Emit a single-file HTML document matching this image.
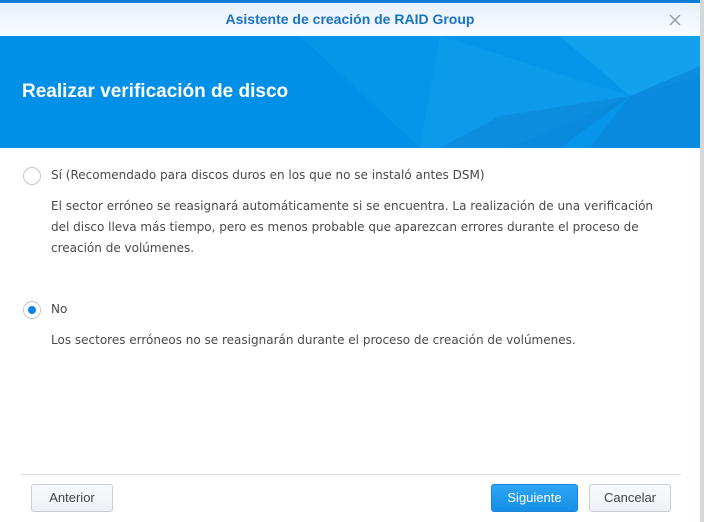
<!DOCTYPE html>
<html><head><meta charset="utf-8"><style>
*{margin:0;padding:0;box-sizing:border-box}
body{width:704px;height:522px;overflow:hidden;background:#fff;position:relative;font-family:"DejaVu Sans","Liberation Sans",sans-serif;}
.topline{position:absolute;left:0;top:0;width:704px;height:3px;background:#0a7fd6}
.hdr{position:absolute;left:0;top:3px;width:700px;height:33px;background:linear-gradient(#e6f1fb,#fafcfe);}
.hdr .t{position:absolute;left:0;right:0;top:8px;text-align:center;color:#1a72c2;font:bold 14px "Liberation Sans",sans-serif;}
.x{position:absolute;left:667px;top:9px;width:16px;height:16px}
.rb{position:absolute;left:700px;top:0;width:4px;height:522px;background:#d4d7db}
.banner{position:absolute;left:0;top:36px;width:700px;height:112px;background:#0090e8;overflow:hidden}
.banner h1{position:absolute;left:22px;top:45px;color:#fff;font:bold 19px "Liberation Sans",sans-serif}
.txt{position:absolute;color:#4a4a4a;font-size:12px;line-height:21px;white-space:nowrap}
.radio{position:absolute;width:18px;height:18px;border-radius:50%;border:1px solid #c4c8cc;background:#fff}
.radio.on::after{content:"";position:absolute;left:4px;top:4px;width:8px;height:8px;border-radius:50%;background:#0a84e6}
.sep{position:absolute;left:21px;top:474px;width:660px;height:1px;background:#dcdcdc}
.btn{position:absolute;top:484px;height:28px;border:1px solid #c8cdd3;border-radius:3px;background:linear-gradient(#f8fafc,#eef2f6);color:#444;font:13px "Liberation Sans",sans-serif;text-align:center;line-height:26px}
.btn.p{background:linear-gradient(#2ea4f5,#1590e6);border-color:#1b86d8;color:#fff}
</style></head><body>
<div class="topline"></div>
<div class="hdr"><div class="t">Asistente de creación de RAID Group</div>
<svg class="x" viewBox="0 0 16 16"><path d="M3 3L13 13M13 3L3 13" stroke="#9aa0a6" stroke-width="1.5"/></svg></div>
<div class="banner">
<svg width="700" height="112" style="position:absolute;left:0;top:0">
<polygon points="300,0 700,0 700,112 420,112" fill="#0795e9"/>
<polygon points="440,0 630,60 510,112 420,112" fill="#1aa3ee" opacity=".4"/>
<polygon points="560,0 700,0 700,40 630,60" fill="#20aef2" opacity=".5"/>
<polygon points="630,60 700,30 700,112 590,112" fill="#0a86d8" opacity=".7"/>
<polygon points="500,80 630,60 560,112 440,112" fill="#0c7fd0" opacity=".5"/>
</svg>
<h1>Realizar verificación de disco</h1></div>
<div class="radio" style="left:23px;top:167px"></div>
<div class="txt" style="left:51px;top:165px">Sí (Recomendado para discos duros en los que no se instaló antes DSM)</div>
<div class="txt" style="left:51px;top:196px">El sector erróneo se reasignará automáticamente si se encuentra. La realización de una verificación<br>del disco lleva más tiempo, pero es menos probable que aparezcan errores durante el proceso de<br>creación de volúmenes.</div>
<div class="radio on" style="left:23px;top:301px"></div>
<div class="txt" style="left:51px;top:299px">No</div>
<div class="txt" style="left:51px;top:330px">Los sectores erróneos no se reasignarán durante el proceso de creación de volúmenes.</div>
<div class="sep"></div>
<div class="btn" style="left:31px;width:82px">Anterior</div>
<div class="btn p" style="left:491px;width:87px">Siguiente</div>
<div class="btn" style="left:589px;width:82px">Cancelar</div>
<div class="rb"></div>
</body></html>
